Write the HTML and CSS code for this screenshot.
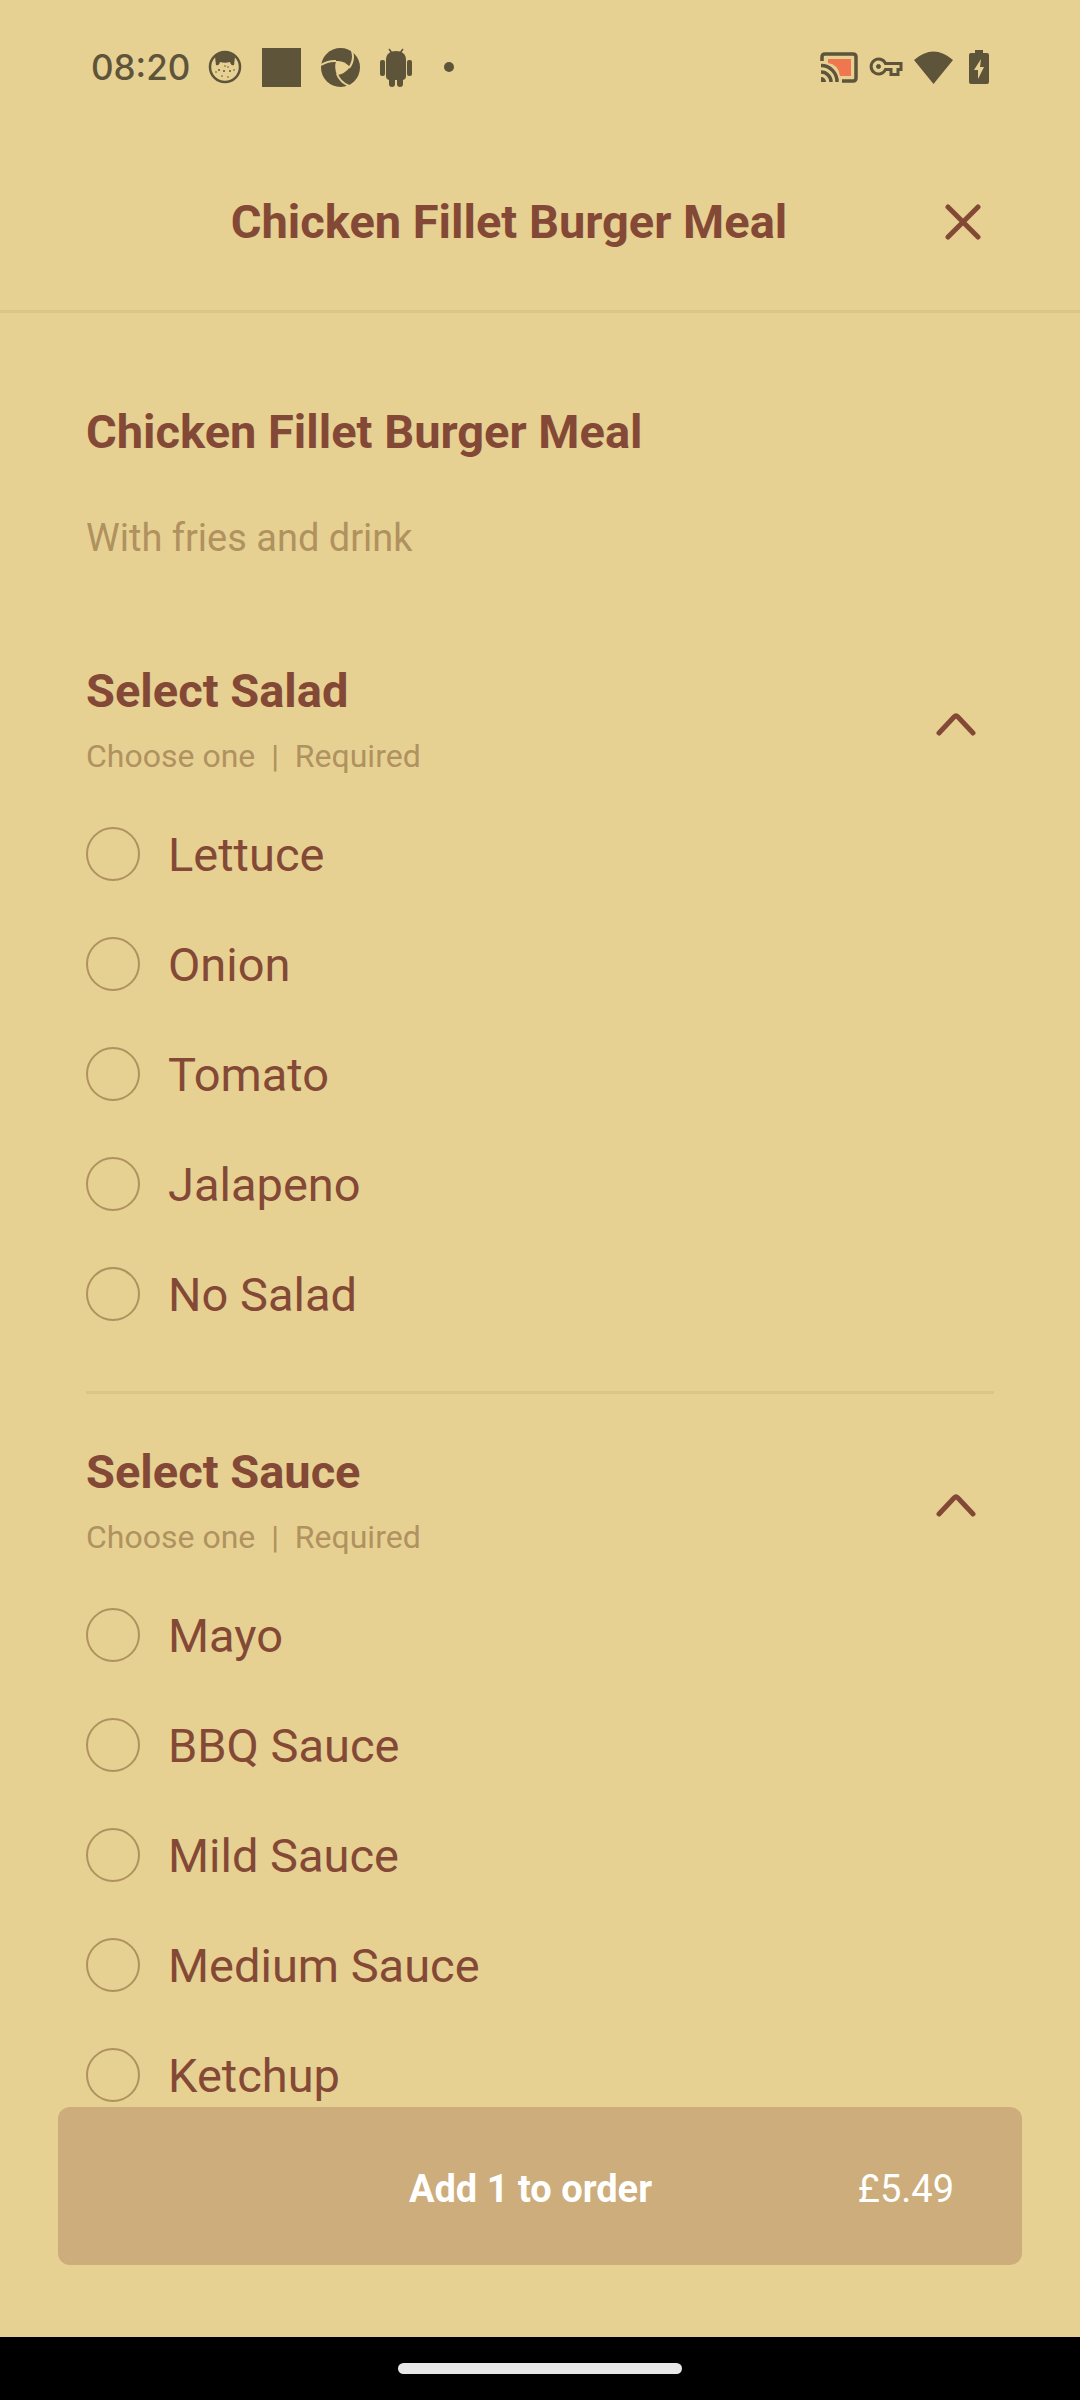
FILE: index.html
```html
<!DOCTYPE html>
<html lang="en">
<head>
    <meta charset="UTF-8">
    <meta name="viewport" content="width=device-width, initial-scale=1.0">
    <title>Chicken Fillet Burger Meal</title>
    <link rel="stylesheet" href="styles.css">
</head>
<body>
    <div class="status-bar">
        <span class="clock">08:20</span>
        <div class="status-left">
            <!-- Cat face -->
            <svg width="34" height="34" viewBox="0 0 34 34">
                <circle cx="17" cy="17" r="15" fill="none" stroke="currentColor" stroke-width="2.500"/>
                <path d="M7 7 Q17 -2 27 7 L26 15 Q23 16 22 12 Q17 13.500 12 12 Q11 16 8 15 Z" fill="currentColor"/>
                <g fill="currentColor">
                    <circle cx="11" cy="20" r="1"/><circle cx="22" cy="21" r="1"/>
                    <circle cx="17" cy="16" r="0.800"/><circle cx="20" cy="17" r="0.800"/>
                    <circle cx="16" cy="21" r="1"/><circle cx="8" cy="22" r="0.800"/>
                    <circle cx="26" cy="20" r="0.800"/><circle cx="14" cy="26" r="0.800"/><circle cx="20" cy="27" r="0.800"/>
                </g>
            </svg>
            <svg width="39" height="39" viewBox="0 0 39 39"><path d="M0 0h39v39H0z" fill="currentColor"/></svg>
            <!-- Shutter -->
            <svg width="39" height="39" viewBox="0 0 39 39">
                <circle cx="19.500" cy="19.500" r="19.500" fill="currentColor"/>
                <path class="cutout" d="M15 13Q23 12 29 19Q24 26 16 27Q13 20 15 13Z"/>
                <path class="slit" d="M0 17Q7 12.500 15 13M31 3Q34 12 28 20M16 26Q19 34 28 38"/>
            </svg>
            <!-- Android -->
            <svg width="32" height="39" viewBox="0 0 32 39" fill="currentColor">
                <path d="M6 12 C6 6 10 3 16 3 S26 6 26 12 V28 Q26 32 22 32 H10 Q6 32 6 28 Z"/>
                <rect x="0" y="12" width="5" height="16" rx="2"/>
                <rect x="27" y="12" width="5" height="16" rx="2"/>
                <rect x="9" y="28" width="6" height="11" rx="3"/>
                <rect x="17" y="28" width="6" height="11" rx="3"/>
                <path d="M9 1l3 4M23 1l-3 4" stroke="currentColor" stroke-width="1.500"/>
            </svg>
            <span class="more-dot"></span>
        </div>
        <div class="status-right">
            <!-- Cast -->
            <svg width="38" height="31" viewBox="0 0 38 31">
                <path d="M8 7H31V24H20Q18 12 8 11Z" fill="#f0764f"/>
                <g fill="none" stroke="currentColor" stroke-width="3.500">
                    <path d="M2 9V5Q2 2 5 2H33Q36 2 36 5V26Q36 29 33 29H22"/>
                    <path d="M1 13.500A16 16 0 0 1 17 30M1 20A10 10 0 0 1 11 30"/>
                </g>
                <path d="M1 25a5 5 0 0 1 5 5H1z" fill="currentColor"/>
            </svg>
            <!-- VPN key -->
            <svg width="34" height="20" viewBox="0 0 34 20" fill="none" stroke="currentColor" stroke-width="3">
                <path d="M16.500 6.500H32V12.500H29V17.500H22V12.500H16.500A7.500 7.500 0 1 1 16.500 6.500Z"/>
                <circle cx="9.500" cy="9.500" r="2" fill="currentColor" stroke-width="1"/>
            </svg>
            <!-- Wifi -->
            <svg width="39" height="33" viewBox="0 0 39 33"><path d="M0 9Q19.500 -8 39 9L19.500 33Z" fill="currentColor"/></svg>
            <!-- Battery charging -->
            <svg width="30" height="34" viewBox="-5 0 30 34">
                <path d="M6 0H14V3H18Q20 3 20 5V32Q20 34 18 34H2Q0 34 0 32V5Q0 3 2 3H6Z" fill="currentColor"/>
                <path class="cutout" d="M12 9L5 20H9V29L15 17H11Z"/>
            </svg>
        </div>
    </div>

    <header class="header">
        <h1 class="heading header-title">Chicken Fillet Burger Meal</h1>
        <button class="icon-button close" type="button" aria-label="Close">
            <svg width="36" height="36" viewBox="0 0 36 36"><path d="M3 3L33 33M33 3L3 33"/></svg>
        </button>
    </header>

    <main class="content">
        <h2 class="heading">Chicken Fillet Burger Meal</h2>
        <p class="description">With fries and drink</p>

        <section class="group" role="radiogroup" aria-labelledby="salad-title">
            <div class="group-head">
                <div>
                    <h3 class="heading" id="salad-title">Select Salad</h3>
                    <p class="hint">Choose one&nbsp; |&nbsp; Required</p>
                </div>
                <button class="icon-button toggle" type="button" aria-label="Collapse salad" aria-expanded="true">
                    <svg width="40" height="24" viewBox="0 0 40 24"><path d="M3 21L18 5Q20 3 22 5L37 21"/></svg>
                </button>
            </div>
            <label class="option"><input type="radio" name="salad">Lettuce</label>
            <label class="option"><input type="radio" name="salad">Onion</label>
            <label class="option"><input type="radio" name="salad">Tomato</label>
            <label class="option"><input type="radio" name="salad">Jalapeno</label>
            <label class="option"><input type="radio" name="salad">No Salad</label>
        </section>

        <section class="group" role="radiogroup" aria-labelledby="sauce-title">
            <div class="group-head">
                <div>
                    <h3 class="heading" id="sauce-title">Select Sauce</h3>
                    <p class="hint">Choose one&nbsp; |&nbsp; Required</p>
                </div>
                <button class="icon-button toggle" type="button" aria-label="Collapse sauce" aria-expanded="true">
                    <svg width="40" height="24" viewBox="0 0 40 24"><path d="M3 21L18 5Q20 3 22 5L37 21"/></svg>
                </button>
            </div>
            <label class="option"><input type="radio" name="sauce">Mayo</label>
            <label class="option"><input type="radio" name="sauce">BBQ Sauce</label>
            <label class="option"><input type="radio" name="sauce">Mild Sauce</label>
            <label class="option"><input type="radio" name="sauce">Medium Sauce</label>
            <label class="option"><input type="radio" name="sauce">Ketchup</label>
        </section>
    </main>

    <footer class="footer">
        <button class="add-button" type="button">
            <span class="add-label">Add 1 to order</span>
            <span class="add-price">£5.49</span>
        </button>
    </footer>

    <div class="nav-bar"><span class="nav-handle"></span></div>
</body>
</html>
```
FILE: styles.css
```css
:root {
    --background: #e6d192;
    --primary: #844936;
    --muted: #b0915f;
    --divider: #dbc587;
    --button: #cdad7b;
    --status: #5d543a;
}

* {
    margin: 0;
    padding: 0;
    box-sizing: border-box;
}

body {
    display: flex;
    flex-direction: column;
    height: 100vh;
    background: var(--background);
    color: var(--primary);
    font-family: Roboto, sans-serif;
}

svg {
    display: block;
    flex-shrink: 0;
}

.status-bar {
    display: flex;
    align-items: center;
    padding: 47px 86px 45px 91px;
    color: var(--status);
}

.clock {
    font-family: Inter, sans-serif;
    font-size: 35px;
    font-weight: 500;
    line-height: 40px;
}

.status-left {
    display: flex;
    align-items: center;
    gap: 20px;
    margin-left: 18px;
}

.more-dot {
    width: 10px;
    height: 10px;
    margin-left: 12px;
    border-radius: 50%;
    background: currentColor;
}

.status-right {
    display: flex;
    align-items: center;
    gap: 11px;
    margin-left: auto;
}

.cutout {
    fill: var(--background);
}

.slit {
    fill: none;
    stroke: var(--background);
    stroke-width: 2;
}

.heading {
    font-size: 47px;
    font-weight: 700;
    line-height: 56px;
}

.header {
    display: flex;
    align-items: center;
    padding: 62px 84px 60px 88px;
    border-bottom: 3px solid var(--divider);
}

.header-title {
    flex: 1;
    text-align: center;
}

.icon-button {
    display: flex;
    align-items: center;
    justify-content: center;
    border: none;
    background: none;
    color: inherit;
    cursor: pointer;
}

.icon-button path {
    fill: none;
    stroke: currentColor;
    stroke-width: 5;
    stroke-linecap: round;
}

.close {
    width: 66px;
    height: 56px;
}

.content {
    flex: 1;
    min-height: 0;
    padding: 91px 86px 0;
    overflow-y: auto;
    scrollbar-width: none;
}

.description {
    margin: 56px 0 103px;
    color: var(--muted);
    font-size: 38px;
    line-height: 44px;
}

.group + .group {
    margin-top: 42px;
    padding-top: 50px;
    border-top: 3px solid var(--divider);
}

.group-head {
    display: flex;
    align-items: center;
    justify-content: space-between;
    margin-bottom: 23px;
}

.hint {
    margin-top: 17px;
    color: var(--muted);
    font-size: 32px;
    line-height: 40px;
}

.toggle {
    width: 76px;
    height: 76px;
    padding-top: 8px;
}

.option {
    display: flex;
    align-items: center;
    gap: 28px;
    height: 110px;
    font-size: 47px;
}

.option input {
    appearance: none;
    width: 54px;
    height: 54px;
    border: 2px solid var(--muted);
    border-radius: 50%;
}

.option input:checked {
    background: var(--primary);
    box-shadow: inset 0 0 0 10px var(--background);
}

.footer {
    padding: 0 58px 72px;
}

.add-button {
    display: grid;
    grid-template-columns: 1fr auto 1fr;
    align-items: center;
    width: 100%;
    padding: 60px 68px 54px 49px;
    border: none;
    border-radius: 12px;
    background: var(--button);
    color: #fff;
    font-family: inherit;
    font-size: 38px;
    line-height: 44px;
}

.add-label {
    grid-column: 2;
    font-weight: 700;
}

.add-price {
    text-align: right;
}

.nav-bar {
    display: flex;
    justify-content: center;
    padding: 26px 0;
    background: #000;
}

.nav-handle {
    width: 284px;
    height: 11px;
    border-radius: 6px;
    background: #e8e8e8;
}
```
